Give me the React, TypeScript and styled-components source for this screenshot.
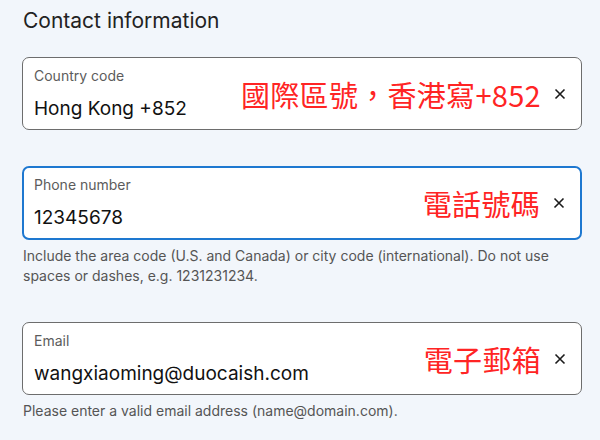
import React from 'react'
import styled, { createGlobalStyle } from 'styled-components'

const GlobalStyle = createGlobalStyle`
  body {
    margin: 0;
    background-color: #f2f6fb;
    font-family: Inter, "Noto Sans", sans-serif;
    color: #1b1b1b;
  }
`

const fields = [
  {
    label: 'Country code',
    value: 'Hong Kong +852',
    note: '國際區號，香港寫+852',
    focused: false,
    help: '',
  },
  {
    label: 'Phone number',
    value: '12345678',
    note: '電話號碼',
    focused: true,
    help: 'Include the area code (U.S. and Canada) or city code (international). Do not use spaces or dashes, e.g. 1231231234.',
  },
  {
    label: 'Email',
    value: 'wangxiaoming@duocaish.com',
    note: '電子郵箱',
    focused: false,
    help: 'Please enter a valid email address (name@domain.com).',
  },
]

const App = () => {
  return (
    <StWrapper>
      <GlobalStyle />
      <StTitle>Contact information</StTitle>
      <StFieldList>
        {fields.map((f) => (
          <StField key={f.label}>
            <StBox $focused={f.focused}>
              <StTextCol>
                <StLabel>{f.label}</StLabel>
                <StValue>{f.value}</StValue>
              </StTextCol>
              <StNote>{f.note}</StNote>
              <StClear aria-label="clear">
                <svg width="12" height="12" viewBox="0 0 12 12">
                  <path d="M1.5 1.5 L10.5 10.5 M10.5 1.5 L1.5 10.5" stroke="#1b1b1b" strokeWidth="1.6" fill="none" />
                </svg>
              </StClear>
            </StBox>
            {f.help && <StHelp>{f.help}</StHelp>}
          </StField>
        ))}
      </StFieldList>
    </StWrapper>
  )
}

// Wrapper
const StWrapper = styled.div`
  width: 560px;
  padding: 6px 0 0 22px;
`

const StTitle = styled.h2`
  margin: 0 0 0 1px;
  font-size: 21px;
  font-weight: 400;
  line-height: 30px;
  color: #222;
`

const StFieldList = styled.div`
  display: flex;
  flex-direction: column;
  gap: 36px;
  margin-top: 21px;
`

const StField = styled.div`
  display: flex;
  flex-direction: column;
`

// Input box
const StBox = styled.div<{ $focused: boolean }>`
  display: flex;
  align-items: center;
  box-sizing: border-box;
  height: ${(p) => (p.$focused ? '74px' : '73px')};
  padding: 0 14px 0 ${(p) => (p.$focused ? '10px' : '11px')};
  background: #fff;
  border: ${(p) => (p.$focused ? '2px solid #1e78d0' : '1px solid #6d6d6d')};
  border-radius: 7px;
`

const StTextCol = styled.div`
  flex: 1;
  display: flex;
  flex-direction: column;
  gap: 12px;
`

const StLabel = styled.span`
  font-size: 14px;
  line-height: 17px;
  color: #5c5c5c;
`

const StValue = styled.span`
  font-size: 19px;
  line-height: 25px;
  color: #111;
`

const StNote = styled.span`
  font-family: "Noto Sans CJK TC", "Noto Sans", sans-serif;
  font-size: 29px;
  letter-spacing: 0.3px;
  color: #ff2424;
  margin-right: 12px;
`

const StClear = styled.span`
  display: flex;
  align-items: center;
  justify-content: center;
  width: 14px;
  height: 14px;
`

const StHelp = styled.p`
  margin: 6px 0 0 1px;
  font-size: 14px;
  line-height: 20px;
  color: #555;
`

export default App
